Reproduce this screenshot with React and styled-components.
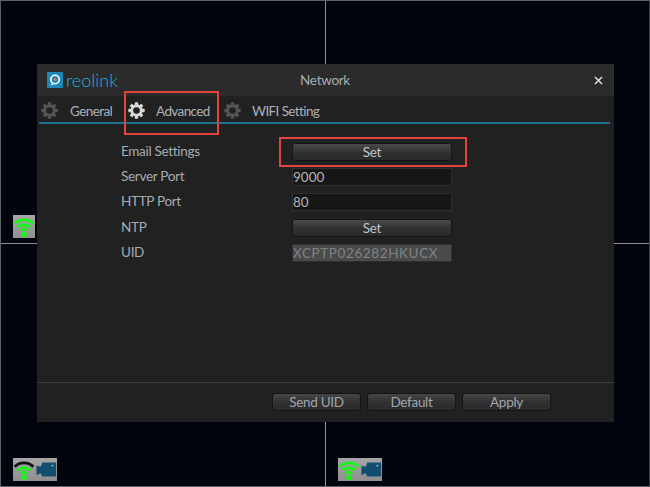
import React from 'react'
import styled, { createGlobalStyle } from 'styled-components'

const Global = createGlobalStyle`
  html, body { margin: 0; padding: 0; background: #01030d; }
`

const Screen = styled.div`
  position: relative;
  width: 650px;
  height: 487px;
  overflow: hidden;
  box-sizing: border-box;
  border: 1px solid #5c5f63;
  border-right-color: #3c3f44;
  background: #01030d;
  font-family: Lato, "Liberation Sans", sans-serif;
  font-size: 13.5px;
  letter-spacing: -0.3px;
  display: grid;
  grid-template-columns: 325px 323px;
  grid-template-rows: 243px 242px;
`

const Cell = styled.div`
  box-sizing: border-box;
  display: flex;
  align-items: flex-end;
  padding: 0 0 5px 12px;
  border-right: ${({ $right }) => ($right ? '1px solid #8d8f92' : 'none')};
  border-bottom: ${({ $bottom }) => ($bottom ? '1px solid #8d8f92' : 'none')};
`

const Status = styled.div`
  display: flex;
  height: 23px;
  background: linear-gradient(#a6a6a6, #8f8f8f);
`

const StatusIcon = styled.div`
  width: 22px;
  height: 23px;
  display: flex;
  align-items: center;
  justify-content: center;
`

const Dialog = styled.div`
  position: absolute;
  left: 36px;
  top: 63px;
  width: 577px;
  height: 358px;
  background: #212121;
  display: flex;
  flex-direction: column;
  color: #c3c8cf;
`

const TitleBar = styled.div`
  height: 32px;
  flex: none;
  background: #2b2b2b;
  display: grid;
  grid-template-columns: 1fr auto 1fr;
  align-items: center;
  padding: 0 11px 0 10px;
`

const Logo = styled.div`
  display: flex;
  align-items: center;
  gap: 3px;
`

const LogoText = styled.span`
  font-weight: 300;
  font-size: 18px;
  line-height: 20px;
  letter-spacing: 0;
  color: #1fb0dc;
`

const Title = styled.div`
  color: #a8adb3;
  padding-bottom: 1px;
`

const Close = styled.div`
  justify-self: end;
  display: flex;
`

const Tabs = styled.div`
  height: 28px;
  box-sizing: border-box;
  flex: none;
  display: flex;
  align-items: center;
  margin: 0 4px 0 2px;
  border-bottom: 2px solid #1f6f93;
  padding: 3px 0 0 2px;
`

const Tab = styled.div`
  display: flex;
  align-items: center;
  width: ${({ $width }) => $width}px;
  gap: ${({ $gap }) => $gap}px;
  color: #aab0b8;
  letter-spacing: -0.6px;
  white-space: nowrap;
`

const Form = styled.div`
  flex: 1;
  padding: 15px 0 0 84px;
  display: flex;
  flex-direction: column;
`

const Row = styled.div`
  height: 25.3px;
  display: grid;
  grid-template-columns: 171px 160px;
  align-items: center;
`

const Label = styled.div`
  color: #a6acb4;
  padding-bottom: 2px;
`

const SetButton = styled.div`
  height: 18px;
  box-sizing: border-box;
  border-radius: 3px;
  border: 1px solid #141414;
  background: linear-gradient(#4a4a4a, #303030 55%, #2a2a2a);
  color: #c0c5cb;
  line-height: 16px;
  text-align: center;
`

const Input = styled.div`
  height: 18px;
  box-sizing: border-box;
  border: 1px solid #2e2e2e;
  background: ${({ $disabled }) => ($disabled ? '#4a4a4a' : '#161616')};
  color: ${({ $disabled }) => ($disabled ? '#7e8288' : '#b0b5bc')};
  line-height: 16px;
  letter-spacing: ${({ $disabled }) => ($disabled ? '0.6px' : '0')};
  white-space: nowrap;
  overflow: hidden;
`

const Footer = styled.div`
  height: 40px;
  box-sizing: border-box;
  flex: none;
  border-top: 1px solid #3d3d3b;
  display: flex;
  gap: 6px;
  padding: 10px 0 0 235px;
`

const FooterButton = styled.div`
  width: 89px;
  height: 18px;
  box-sizing: border-box;
  border-radius: 3px;
  border: 1px solid #141414;
  background: linear-gradient(#464646, #303030 55%, #2a2a2a);
  color: #a0a6ae;
  line-height: 16px;
  text-align: center;
`

const Callout = styled.div`
  position: absolute;
  box-sizing: border-box;
  border: 2px solid #e2433f;
  left: ${({ $x }) => $x}px;
  top: ${({ $y }) => $y}px;
  width: ${({ $w }) => $w}px;
  height: ${({ $h }) => $h}px;
`

const Gear = ({ color = '#555555', size = 17 }) => {
  const teeth = [0, 45, 90, 135, 180, 225, 270, 315]
  return (
    <svg width={size} height={size} viewBox="0 0 24 24">
      {teeth.map((a) => (
        <rect key={a} x="9.6" y="0.5" width="4.8" height="6" rx="0.8" fill={color} transform={`rotate(${a} 12 12)`} />
      ))}
      <circle cx="12" cy="12" r="6.7" fill="none" stroke={color} strokeWidth="4" />
    </svg>
  )
}

const Wifi = ({ arc = '#14f814' }) => (
  <svg width="22" height="22" viewBox="0 0 20 20" fill="none">
    <path d="M1.5 7C6 2.4 14 2.4 18.5 7" stroke={arc} strokeWidth="2.6" />
    <path d="M4.3 10.2C7.5 7.2 12.5 7.2 15.7 10.2" stroke="#14f814" strokeWidth="2.6" />
    <path d="M7 13.1C8.7 11.7 11.3 11.7 13 13.1" stroke="#14f814" strokeWidth="2.4" />
    <circle cx="10" cy="16.8" r="2.5" fill="#14f814" />
  </svg>
)

const Camera = () => (
  <svg width="22" height="17" viewBox="0 0 20 16">
    <path d="M6.5 1.5H19.5v13H6.5L5 11.5 1 13.5V8L1 4.5 5 5.5Z" fill="#124e6e" />
    <circle cx="16" cy="4.5" r="1" fill="#7fb4cc" />
  </svg>
)

const LogoMark = () => (
  <svg width="16" height="16" viewBox="0 0 16 16">
    <rect width="16" height="16" rx="1" fill="#1c88b8" />
    <circle cx="8" cy="7.5" r="4.2" fill="none" stroke="#fff" strokeWidth="1.6" />
    <circle cx="8" cy="7.5" r="1.4" fill="#e8734a" />
    <path d="M4.5 11.5L3.6 13.5 6.5 12.4Z" fill="#fff" />
  </svg>
)

const X = () => (
  <svg width="9" height="9" viewBox="0 0 9 9">
    <path d="M1 1L8 8M8 1L1 8" stroke="#e8e8e8" strokeWidth="1.4" />
  </svg>
)

export default function App() {
  return (
    <>
      <Global />
      <Screen>
        <Cell $right $bottom>
          <Status>
            <StatusIcon><Wifi /></StatusIcon>
          </Status>
        </Cell>
        <Cell $bottom />
        <Cell $right>
          <Status>
            <StatusIcon><Wifi arc="#111" /></StatusIcon>
            <StatusIcon><Camera /></StatusIcon>
          </Status>
        </Cell>
        <Cell>
          <Status>
            <StatusIcon><Wifi /></StatusIcon>
            <StatusIcon><Camera /></StatusIcon>
          </Status>
        </Cell>

        <Dialog>
          <TitleBar>
            <Logo>
              <LogoMark />
              <LogoText>reolink</LogoText>
            </Logo>
            <Title>Network</Title>
            <Close><X /></Close>
          </TitleBar>
          <Tabs>
            <Tab $width={87} $gap={12}><Gear />General</Tab>
            <Tab $width={96} $gap={11}><Gear color="#d8d8d8" />Advanced</Tab>
            <Tab $width={100} $gap={11}><Gear />WIFI Setting</Tab>
          </Tabs>
          <Form>
            <Row><Label>Email Settings</Label><SetButton>Set</SetButton></Row>
            <Row><Label>Server Port</Label><Input>9000</Input></Row>
            <Row><Label>HTTP Port</Label><Input>80</Input></Row>
            <Row><Label>NTP</Label><SetButton>Set</SetButton></Row>
            <Row><Label>UID</Label><Input $disabled>XCPTP026282HKUCX</Input></Row>
          </Form>
          <Footer>
            <FooterButton>Send UID</FooterButton>
            <FooterButton>Default</FooterButton>
            <FooterButton>Apply</FooterButton>
          </Footer>
        </Dialog>

        <Callout $x={123} $y={90} $w={95} $h={44} />
        <Callout $x={278} $y={136} $w={188} $h={30} />
      </Screen>
    </>
  )
}
